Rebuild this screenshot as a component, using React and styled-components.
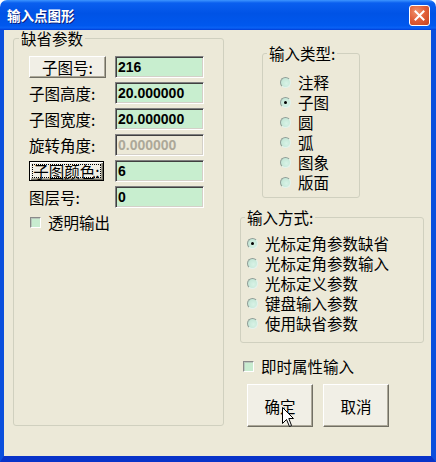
import styled, { createGlobalStyle } from 'styled-components';

const CJK = `"Noto Sans CJK SC", "Noto Sans", sans-serif`;

const GlobalStyle = createGlobalStyle`
  html, body { margin: 0; padding: 0; background: #fff; }
  body { width: 436px; height: 462px; overflow: hidden; font-family: ${CJK}; }
`;

const Window = styled.div`
  position: relative;
  width: 436px;
  height: 462px;
  display: flex;
  flex-direction: column;
  box-sizing: border-box;
`;

const TitleBar = styled.div`
  height: 30px;
  flex-shrink: 0;
  display: flex;
  align-items: center;
  justify-content: space-between;
  padding: 0 6px 0 7px;
  border-radius: 7px 7px 0 0;
  background: linear-gradient(to bottom, #3d95ff 0%, #0a5fef 10%, #0053e6 45%, #0058ee 85%, #0a62f5 93%, #003dd7 100%);
`;

const TitleText = styled.span`
  display: block;
  color: #fff;
  font: bold 13.5px/16px ${CJK};
  text-shadow: 1px 1px 0 #0a1f7d;
`;

const CloseButton = styled.div`
  width: 21px;
  height: 21px;
  box-sizing: border-box;
  border: 1px solid #fff;
  border-radius: 3px;
  background: radial-gradient(circle at 35% 30%, #f0936e 0%, #e2613b 45%, #c5421d 100%);
  display: flex;
  align-items: center;
  justify-content: center;
  margin-top: 1px;
`;

const Frame = styled.div`
  flex: 1;
  display: flex;
  border-left: 4px solid #0a4fdd;
  border-right: 5px solid #0a4fdd;
  border-bottom: 6px solid #0833c9;
  box-shadow: inset 1px 0 0 #1b66f0, inset -1px 0 0 #1b66f0;
`;

const Client = styled.div`
  flex: 1;
  display: flex;
  align-items: flex-start;
  background: #ece9d8;
  padding-left: 9px;
  font: 15.5px/16px ${CJK};
  color: #000;
`;

const Group = styled.fieldset`
  box-sizing: border-box;
  margin: 0;
  padding: 0;
  min-width: 0;
  border: 1px solid #d0d0bf;
  border-radius: 3px;
  width: ${p => p.$w}px;
  height: ${p => p.$h}px;
  margin-left: ${p => p.$ml || 0}px;
  margin-top: ${p => p.$mt || 0}px;
`;

const Legend = styled.legend`
  font: 15.5px/16px ${CJK};
  color: #000;
  padding: 0 2px;
  margin-left: ${p => p.$ml}px;
`;

const ParamGrid = styled.div`
  display: grid;
  grid-template-columns: 86px 89px;
  grid-auto-rows: 22px;
  row-gap: 4px;
  align-items: center;
  padding: 10px 0 0 15px;
`;

const Text = styled.span`
  display: block;
  line-height: 16px;
  white-space: nowrap;
`;

const PushButton = styled.div`
  box-sizing: border-box;
  width: ${p => p.$w}px;
  height: ${p => p.$h}px;
  display: flex;
  align-items: center;
  justify-content: center;
  white-space: nowrap;
  line-height: 16px;
  background: #f1efe6;
  border: 1px solid;
  border-color: #fff #716f64 #716f64 #fff;
  box-shadow: inset -1px -1px 0 #aca899;
  ${p => p.$focused && `
    border-color: #000;
    box-shadow: inset 1px 1px 0 #fff, inset -1px -1px 0 #716f64, inset -2px -2px 0 #aca899;
    outline: 1px dotted #000;
    outline-offset: -4px;
  `}
`;

const Field = styled.div`
  box-sizing: border-box;
  width: 89px;
  height: 22px;
  padding-left: 2px;
  display: flex;
  align-items: center;
  font: bold 14px/16px "Liberation Sans", Arial, sans-serif;
  color: ${p => (p.$disabled ? '#aca899' : '#000')};
  background: ${p => (p.$disabled ? '#ece9d8' : '#c8eecf')};
  border: 1px solid;
  border-color: #808080 #fff #fff #808080;
  box-shadow: inset 1px 1px 0 #404040, inset -1px -1px 0 #d4d0c8;
`;

const CheckRow = styled.div`
  display: flex;
  align-items: center;
  gap: 7px;
  height: 16px;
  padding-left: ${p => p.$pl || 0}px;
  margin-top: ${p => p.$mt || 0}px;
`;

const CheckBox = styled.span`
  box-sizing: border-box;
  width: 11px;
  height: 11px;
  background: #c8ecd0;
  border: 1px solid;
  border-color: #8a8a8a #fff #fff #8a8a8a;
  box-shadow: inset 1px 1px 0 #b8c8bc;
`;

const RightColumn = styled.div`
  display: flex;
  flex-direction: column;
  align-items: flex-start;
  margin-left: 16px;
  padding-top: 15px;
`;

const RadioList = styled.div`
  display: flex;
  flex-direction: column;
  padding: ${p => p.$pt}px 0 0 ${p => p.$pl}px;
`;

const RadioRow = styled.div`
  display: flex;
  align-items: center;
  height: ${p => p.$h}px;
  gap: ${p => p.$gap}px;
  white-space: nowrap;
`;

const RadioDot = styled.span`
  position: relative;
  box-sizing: border-box;
  width: 11px;
  height: 11px;
  border-radius: 50%;
  background: radial-gradient(circle at 60% 60%, #d8f2e6 0%, #c4e6d6 70%, #b3d3c5 100%);
  border: 1px solid;
  border-color: #8e9e98 #e4f2ec #e4f2ec #8e9e98;
  &::after {
    content: '';
    display: ${p => (p.$checked ? 'block' : 'none')};
    position: absolute;
    left: 3px;
    top: 3px;
    width: 3px;
    height: 3px;
    border-radius: 50%;
    background: #000;
  }
`;

const ButtonRow = styled.div`
  display: flex;
  gap: 10px;
  margin: 10px 0 0 7px;
`;

const Cursor = styled.svg`
  position: absolute;
  left: 282px;
  top: 407px;
`;

const typeOptions = ['注释', '子图', '圆', '弧', '图象', '版面'];
const methodOptions = ['光标定角参数缺省', '光标定角参数输入', '光标定义参数', '键盘输入参数', '使用缺省参数'];

export default function App() {
  return (
    <>
      <GlobalStyle />
      <Window>
        <TitleBar>
          <TitleText>输入点图形</TitleText>
          <CloseButton>
            <svg width="11" height="11" viewBox="0 0 11 11">
              <path d="M1.5 1.5 L9.5 9.5 M9.5 1.5 L1.5 9.5" stroke="#fff" strokeWidth="2" strokeLinecap="square" />
            </svg>
          </CloseButton>
        </TitleBar>
        <Frame>
          <Client>
            <Group $w={211} $h={396}>
              <Legend $ml={5}>缺省参数</Legend>
              <ParamGrid>
                <PushButton $w={77} $h={22}>子图号:</PushButton>
                <Field>216</Field>
                <Text>子图高度:</Text>
                <Field>20.000000</Field>
                <Text>子图宽度:</Text>
                <Field>20.000000</Field>
                <Text>旋转角度:</Text>
                <Field $disabled>0.000000</Field>
                <PushButton $w={75} $h={20} $focused>子图颜色:</PushButton>
                <Field>6</Field>
                <Text>图层号:</Text>
                <Field>0</Field>
              </ParamGrid>
              <CheckRow $pl={16} $mt={6}>
                <CheckBox />
                <Text>透明输出</Text>
              </CheckRow>
            </Group>
            <RightColumn>
              <Group $w={98} $h={153} $ml={22}>
                <Legend $ml={4}>输入类型:</Legend>
                <RadioList $pt={11} $pl={17}>
                  {typeOptions.map(t => (
                    <RadioRow key={t} $h={20} $gap={7}>
                      <RadioDot $checked={t === '子图'} />
                      <Text>{t}</Text>
                    </RadioRow>
                  ))}
                </RadioList>
              </Group>
              <Group $w={184} $h={134} $mt={11}>
                <Legend $ml={4}>输入方式:</Legend>
                <RadioList $pt={8} $pl={6}>
                  {methodOptions.map((t, i) => (
                    <RadioRow key={t} $h={20} $gap={7}>
                      <RadioDot $checked={i === 0} />
                      <Text>{t}</Text>
                    </RadioRow>
                  ))}
                </RadioList>
              </Group>
              <CheckRow $pl={3} $mt={15}>
                <CheckBox />
                <Text>即时属性输入</Text>
              </CheckRow>
              <ButtonRow>
                <PushButton $w={66} $h={43}>确定</PushButton>
                <PushButton $w={66} $h={43}>取消</PushButton>
              </ButtonRow>
            </RightColumn>
          </Client>
        </Frame>
        <Cursor width="13" height="21" viewBox="0 0 13 21">
          <path d="M0.5 0.5 L0.5 16.5 L4.5 12.5 L7.5 19.5 L9.5 18.5 L6.8 11.5 L11.5 11.5 Z" fill="#fff" stroke="#000" strokeWidth="1" />
        </Cursor>
      </Window>
    </>
  );
}
